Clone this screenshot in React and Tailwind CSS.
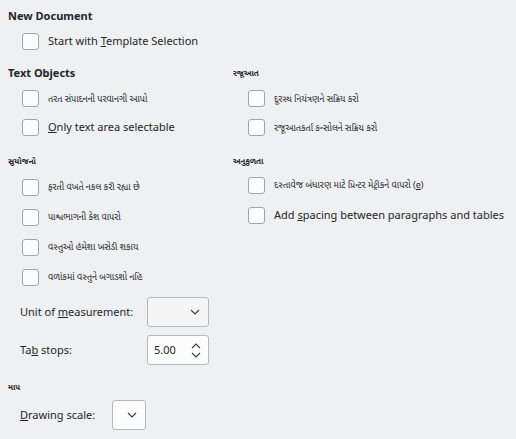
import React from "react";

const font = { fontFamily: '"Noto Sans", "Noto Sans Gujarati", "DejaVu Sans", sans-serif' };

function Box() {
  return (
    <span className="h-[17px] w-[17px] shrink-0 rounded-[3px] border border-[#a2a4a6] bg-[#fcfcfc]" />
  );
}

function Check({ children, small, h = "h-[30px]" }) {
  return (
    <div className={`flex items-center gap-[9px] ${h}`}>
      <Box />
      <span className={small ? "whitespace-nowrap text-[9px]" : "whitespace-nowrap text-[11px]"}>{children}</span>
    </div>
  );
}

function Heading({ children, small }) {
  return (
    <div className={small ? "flex h-[16px] items-center text-[8px] font-bold" : "flex h-[16px] items-center text-[11px] font-bold"}>
      {children}
    </div>
  );
}

function Chevron({ up }) {
  return (
    <svg width="10" height="6" viewBox="0 0 10 6" fill="none" stroke="#3b3e41" strokeWidth="1.1">
      <path d={up ? "M1 5l4-4 4 4" : "M1 1l4 4 4-4"} />
    </svg>
  );
}

export default function App() {
  return (
    <div className="h-[439px] w-[516px] overflow-hidden bg-[#eff0f1] text-[#232629]" style={font}>
      <div className="pl-[8px] pt-[8px]">
        <Heading>New Document</Heading>
        <div className="pl-[14px] pt-[2px]">
          <Check>
            Start with <u>T</u>emplate Selection
          </Check>
        </div>

        <div className="mt-[9px] flex">
          <div className="w-[225px]">
            <Heading>Text Objects</Heading>
            <div className="pl-[14px] pt-[3px]">
              <Check small h="h-[29px]">તરત સંપાદનની પરવાનગી આપો</Check>
              <Check h="h-[29px]">
                <u>O</u>nly text area selectable
              </Check>
            </div>
            <div className="mt-[11px]">
              <Heading small>સુયોજનો</Heading>
              <div className="pl-[14px] pt-[3px]">
                <Check small>ફરતી વખતે નકલ કરી રહ્યા છે</Check>
                <Check small>પાશ્વભાગની કેશ વાપરો</Check>
                <Check small>વસ્તુઓ હંમેશા ખસેડી શકાય</Check>
                <Check small>વળાંકમાં વસ્તુને બગાડશો નહિ</Check>
              </div>
            </div>
          </div>
          <div className="flex-1">
            <Heading small>રજૂઆત</Heading>
            <div className="pl-[15px] pt-[3px]">
              <Check small h="h-[29px]">દૂરસ્થ નિયંત્રણને સક્રિય કરો</Check>
              <Check small h="h-[29px]">રજૂઆતકર્તા કન્સોલને સક્રિય કરો</Check>
            </div>
            <div className="mt-[11px]">
              <Heading small>અનુકુળતા</Heading>
              <div className="pl-[15px] pt-[1px]">
                <Check small>
                  દસ્તાવેજ બંધારણ માટે પ્રિન્ટર મેટ્રીકને વાપરો (<u>e</u>)
                </Check>
                <Check>
                  Add <u>s</u>pacing between paragraphs and tables
                </Check>
              </div>
            </div>
          </div>
        </div>

        <div className="mt-[5px] flex flex-col gap-[8px] pl-[12px]">
          <div className="flex items-center">
            <span className="w-[127px] text-[11px]">
              Unit of <u>m</u>easurement:
            </span>
            <div className="flex h-[30px] w-[62px] items-center justify-end rounded-[3px] border border-[#b6b8ba] bg-[#f5f5f5] pr-[8px]">
              <Chevron />
            </div>
          </div>
          <div className="flex items-center">
            <span className="w-[127px] text-[11px]">
              Ta<u>b</u> stops:
            </span>
            <div className="flex h-[30px] w-[62px] items-center justify-between rounded-[3px] border border-[#b6b8ba] bg-[#fcfcfc] pl-[6px] pr-[7px]">
              <span className="text-[11px]">5.00</span>
              <div className="flex flex-col gap-[3px]">
                <Chevron up />
                <Chevron />
              </div>
            </div>
          </div>
        </div>

        <div className="mt-[14px]">
          <Heading small>માપ</Heading>
        </div>
        <div className="mt-[5px] flex items-center pl-[12px]">
          <span className="w-[92px] text-[11px]">
            <u>D</u>rawing scale:
          </span>
          <div className="flex h-[30px] w-[34px] items-center justify-end rounded-[3px] border border-[#b6b8ba] bg-[#fcfcfc] pr-[8px]">
            <Chevron />
          </div>
        </div>
      </div>
    </div>
  );
}
